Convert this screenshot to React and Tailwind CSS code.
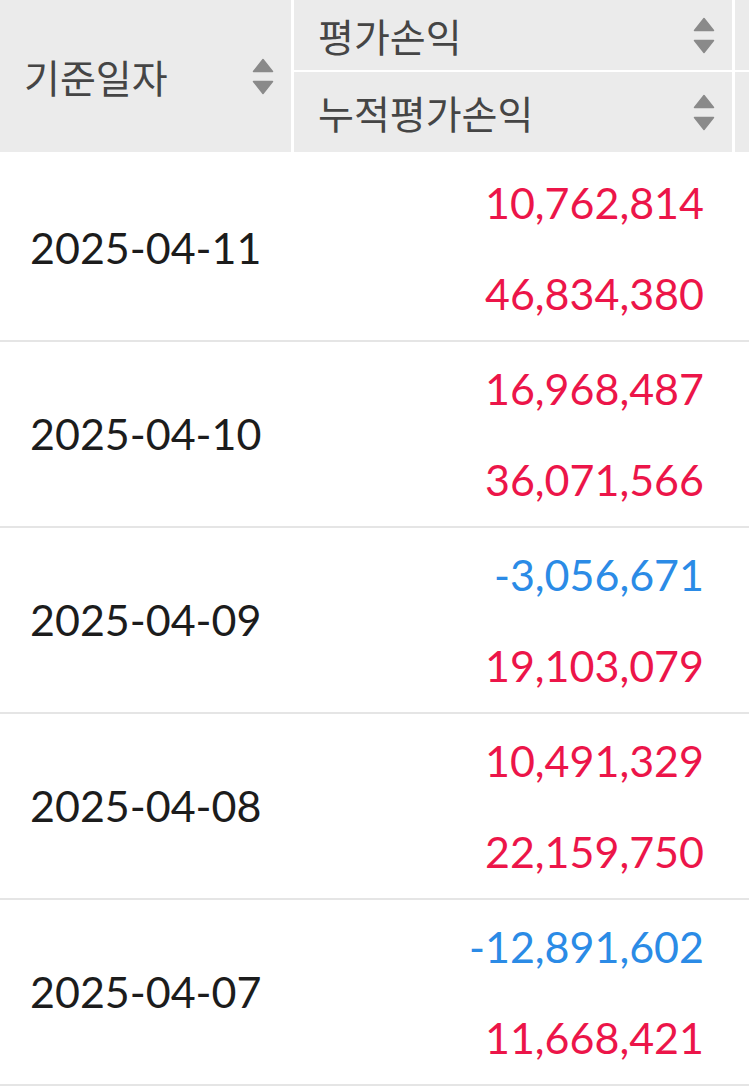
import React from 'react'

const rows = [
  { date: '2025-04-11', pl: 10762814, cum: 46834380 },
  { date: '2025-04-10', pl: 16968487, cum: 36071566 },
  { date: '2025-04-09', pl: -3056671, cum: 19103079 },
  { date: '2025-04-08', pl: 10491329, cum: 22159750 },
  { date: '2025-04-07', pl: -12891602, cum: 11668421 },
]

function SortIcon() {
  return (
    <svg width="22" height="37" viewBox="0 0 22 37" className="shrink-0">
      <path d="M1.5 13.5 L11 1.5 L20.5 13.5 Z" fill="#8a8a8a" stroke="#8a8a8a" strokeWidth="1.5" strokeLinejoin="round" />
      <path d="M1.5 23.5 L11 35.5 L20.5 23.5 Z" fill="#8a8a8a" stroke="#8a8a8a" strokeWidth="1.5" strokeLinejoin="round" />
    </svg>
  )
}

const fmt = n => n.toLocaleString('en-US')

function Num({ v }) {
  const color = v < 0 ? 'text-[#2b8be6]' : 'text-[#ec1549]'
  return <div className={`h-[91px] leading-[91px] ${color}`}>{fmt(v)}</div>
}

export default function App() {
  return (
    <div className="w-[749px] bg-white font-['Lato','Noto_Sans_CJK_KR',sans-serif]">
      <div className="flex h-[152px] gap-[3px]">
        <div className="w-[291px] bg-[#ebebeb] flex items-center justify-between pl-[24px] pr-[17px]">
          <span className="font-['Noto_Sans_CJK_KR',sans-serif] text-[39px] text-[#454545]">기준일자</span>
          <SortIcon />
        </div>
        <div className="w-[438px] flex flex-col gap-[2px]">
          <div className="h-[70px] bg-[#ebebeb] flex items-center justify-between pl-[24px] pr-[17px]">
            <span className="font-['Noto_Sans_CJK_KR',sans-serif] text-[39px] text-[#454545]">평가손익</span>
            <SortIcon />
          </div>
          <div className="h-[80px] bg-[#ebebeb] flex items-center justify-between pl-[24px] pr-[17px]">
            <span className="font-['Noto_Sans_CJK_KR',sans-serif] text-[39px] text-[#454545]">누적평가손익</span>
            <SortIcon />
          </div>
        </div>
        <div className="flex-1 flex flex-col gap-[2px]">
          <div className="h-[70px] bg-[#ebebeb]" />
          <div className="h-[80px] bg-[#ebebeb]" />
        </div>
      </div>
      <div className="pt-[4px]">
        {rows.map(r => (
          <div key={r.date} className="flex items-center h-[186px] border-b-2 border-[#e5e5e5]">
            <div className="w-[294px] pl-[30px] text-[43px] text-[#1c1c1c]">{r.date}</div>
            <div className="w-[438px] flex flex-col items-end pr-[28px] text-[43px]">
              <Num v={r.pl} />
              <Num v={r.cum} />
            </div>
          </div>
        ))}
      </div>
    </div>
  )
}
